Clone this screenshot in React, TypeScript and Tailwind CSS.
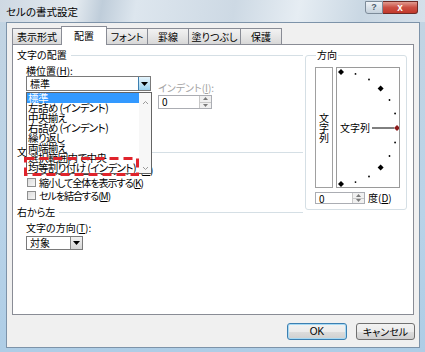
import React from "react";

const tabs = [
  { label: "表示形式", w: "w-[50px]" },
  { label: "配置", w: "w-[46px]", active: true },
  { label: "フォント", w: "w-[42px]" },
  { label: "罫線", w: "w-[42px]" },
  { label: "塗りつぶし", w: "w-[53px]" },
  { label: "保護", w: "w-[42px]" },
];

const items = [
  "標準",
  "左詰め (インデント)",
  "中央揃え",
  "右詰め (インデント)",
  "繰り返し",
  "両端揃え",
  "選択範囲内で中央",
  "均等割り付け (インデント)",
];

function GroupHeader({ title }: { title: string }) {
  return (
    <div className="flex items-center h-[12px] leading-[12px]">
      <span className="whitespace-nowrap">{title}</span>
      <div className="flex-1 h-px bg-[#d5dfe5] ml-[4px]" />
    </div>
  );
}

function DownArrow({ color = "#000" }: { color?: string }) {
  return (
    <svg width="7" height="4" viewBox="0 0 7 4">
      <polygon points="0,0 7,0 3.5,4" fill={color} />
    </svg>
  );
}

function Spin({ className }: { className: string }) {
  return (
    <div className={`flex border border-[#abadb3] bg-white ${className}`}>
      <div className="flex-1 pl-[3px] leading-[12px] text-[10px]">0</div>
      <div className="w-[12px] flex flex-col border-l border-[#c8c8c8] bg-[#f0f0f0]">
        <div className="flex-1 flex items-center justify-center border-b border-[#c8c8c8]">
          <svg width="5" height="3" viewBox="0 0 5 3">
            <polygon points="0,3 5,3 2.5,0" fill="#7a7a7a" />
          </svg>
        </div>
        <div className="flex-1 flex items-center justify-center">
          <svg width="5" height="3" viewBox="0 0 5 3">
            <polygon points="0,0 5,0 2.5,3" fill="#7a7a7a" />
          </svg>
        </div>
      </div>
    </div>
  );
}

function Check({ label, mnemonic }: { label: string; mnemonic: string }) {
  return (
    <div className="flex items-center h-[13px] ml-[10px]">
      <div className="w-[9px] h-[9px] border border-[#8e8f8f] bg-[linear-gradient(135deg,#dcdcdc,#f6f6f6)]" />
      <span className="ml-[3px] whitespace-nowrap leading-[12px] tracking-[-1px]">
        {label}(<span className="underline">{mnemonic}</span>)
      </span>
    </div>
  );
}

function Dial() {
  const cx = 4;
  const cy = 60;
  const r = 56;
  const marks = [-90, -75, -60, -45, -30, -15, 0, 15, 30, 45, 60, 75, 90];
  return (
    <svg width="62" height="119" viewBox="0 0 62 119">
      {marks.map((a) => {
        const rad = (a * Math.PI) / 180;
        const x = cx + r * Math.cos(rad);
        const y = cy - r * Math.sin(rad);
        if (a % 45 === 0) {
          const c = a === 0 ? "#8b1a1a" : "#000";
          return (
            <polygon
              key={a}
              points={`${x},${y - 3} ${x + 3},${y} ${x},${y + 3} ${x - 3},${y}`}
              fill={c}
            />
          );
        }
        return <circle key={a} cx={x} cy={y} r="0.9" fill="#000" />;
      })}
      <line x1="35" y1="60" x2="57" y2="60" stroke="#000" strokeWidth="1" />
      <text
        x="3"
        y="64"
        fontSize="10"
        fontFamily="'Noto Sans CJK JP', sans-serif"
        fill="#000"
      >
        文字列
      </text>
    </svg>
  );
}

export default function App() {
  return (
    <div className="w-[425px] h-[352px] overflow-hidden bg-[linear-gradient(180deg,#c3d4e2_0%,#b9d3e8_60%,#aecde6_100%)] font-['Noto_Sans_CJK_JP',sans-serif] [font-feature-settings:'palt'] text-[10px] text-black">
      <div className="h-[22px] flex items-start justify-between bg-[linear-gradient(100deg,#cfd9e3_0%,#e2e9ef_18%,#bfcdda_24%,#dde6ee_32%,#cdd9e4_55%,#e6edf3_70%,#c9d7e3_85%,#d5e0ea_100%)]">
        <div className="pl-[6px] pt-[5px] text-[10.5px] leading-[14px]">セルの書式設定</div>
        <div className="flex mt-[1px] mr-[7px]">
          <div className="w-[18px] h-[13px] rounded-bl-[3px] border border-[#7d8b99] bg-[linear-gradient(180deg,#eef2f6,#c5d1dc)] flex items-center justify-center text-[9px] leading-[9px] text-[#4e5d6c] font-['Liberation_Sans',sans-serif] font-bold">
            ?
          </div>
          <div className="w-[35px] h-[13px] rounded-br-[3px] border border-l-0 border-[#6e2a25] bg-[linear-gradient(180deg,#e19a8f_0%,#cb4f43_50%,#c2392c_100%)] flex items-center justify-center text-[10px] leading-[10px] text-white font-['Liberation_Sans',sans-serif] font-bold">
            x
          </div>
        </div>
      </div>
      <div className="ml-[6px] mr-[5px] h-[326px] border border-[#7d93a9] bg-[#f0f0f0] flex flex-col">
        <div className="mt-[3px] pl-[5px] h-[19px] flex items-end">
          {tabs.map((t, i) =>
            t.active ? (
              <div
                key={t.label}
                className={`${t.w} -ml-px relative z-10 h-[19px] border border-b-0 border-[#898c95] bg-white flex items-center justify-center pb-[2px]`}
              >
                {t.label}
              </div>
            ) : (
              <div
                key={t.label}
                className={`${t.w} ${i === 0 ? "" : "-ml-px"} h-[16px] mb-px border border-b-0 border-[#898c95] bg-[linear-gradient(180deg,#f2f2f2_0%,#e6e6e6_50%,#d8d8d8_100%)] flex items-center justify-center`}
              >
                {t.label}
              </div>
            )
          )}
        </div>
        <div className="relative mx-[5px] -mt-px h-[271px] border border-[#898c95] bg-white flex">
          <div className="w-[290px] pl-[4px] pt-[4px]">
            <GroupHeader title="文字の配置" />
            <div className="ml-[9px] mt-[5px] flex items-start">
              <div>
                <div className="h-[10px] leading-[10px]">
                  横位置(<span className="underline">H</span>):
                </div>
                <div className="w-[125px] h-[15px] border border-[#7a7a7a] bg-white flex">
                  <div className="flex-1 pl-[3px] leading-[13px]">標準</div>
                  <div className="w-[12px] border-l border-[#3c7fb1] bg-[linear-gradient(180deg,#e5f4fc_0%,#c4e5f6_50%,#98d1ef_100%)] flex items-center justify-center">
                    <DownArrow />
                  </div>
                </div>
              </div>
              <div className="ml-[7px] mt-[16px]">
                <div className="h-[12px] leading-[12px] text-[#a3a3a3] whitespace-nowrap">
                  インデント(<span className="underline">I</span>):
                </div>
                <Spin className="mt-[1px] w-[54px] h-[14px]" />
              </div>
            </div>
            <div className="mt-[37px]">
              <GroupHeader title="文字の制御" />
            </div>
            <div className="mt-[5px]">
              <Check label="折り返して全体を表示する" mnemonic="W" />
              <Check label="縮小して全体を表示する" mnemonic="K" />
              <Check label="セルを結合する" mnemonic="M" />
            </div>
            <div className="mt-[4px]">
              <GroupHeader title="右から左" />
            </div>
            <div className="ml-[9px]">
              <div className="mt-[4px] h-[12px] leading-[12px]">
                文字の方向(<span className="underline">T</span>):
              </div>
              <div className="mt-[2px] w-[57px] h-[14px] border border-[#7a7a7a] bg-white flex">
                <div className="flex-1 pl-[3px] leading-[12px]">対象</div>
                <div className="w-[12px] border-l border-[#8a8a8a] bg-[linear-gradient(180deg,#f2f2f2,#d6d6d6)] flex items-center justify-center">
                  <DownArrow />
                </div>
              </div>
            </div>
          </div>
          <fieldset className="ml-[2px] mt-[4px] w-[102px] h-[161px] border border-[#d5dfe5] rounded-[3px] pl-[9px] pt-[6px]">
            <legend className="ml-[1px] px-[1px] h-[12px] leading-[12px]">方向</legend>
            <div className="flex">
              <div className="w-[18px] h-[121px] border border-[#a0a0a0] bg-white flex flex-col items-center justify-center leading-[10px]">
                <span>文</span>
                <span>字</span>
                <span>列</span>
              </div>
              <div className="ml-[3px] w-[64px] h-[121px] border border-[#9a9a9a] bg-white">
                <Dial />
              </div>
            </div>
            <div className="mt-[4px] flex items-center">
              <Spin className="w-[50px] h-[12px]" />
              <span className="ml-[3px] leading-[12px] whitespace-nowrap">
                度(<span className="underline">D</span>)
              </span>
            </div>
          </fieldset>
          <div className="absolute left-[13px] top-[47px] w-[126px] h-[82px] border border-[#646464] bg-white flex">
            <div className="flex-1 flex flex-col overflow-hidden">
              {items.map((t, i) => (
                <div
                  key={t}
                  className={`h-[10px] leading-[10px] pl-[1px] whitespace-nowrap text-[10.5px] tracking-[-0.6px] ${
                    i === 0 ? "bg-[#3399ff] text-white" : ""
                  }`}
                >
                  {t}
                </div>
              ))}
            </div>
            <div className="w-[12px] bg-[#f7f7f7] flex flex-col justify-between items-center pt-[8px] pb-[3px]">
              <svg width="5" height="3" viewBox="0 0 5 3">
                <polyline points="0,3 2.5,0.5 5,3" fill="none" stroke="#9a9a9a" strokeWidth="1" />
              </svg>
              <svg width="5" height="3" viewBox="0 0 5 3">
                <polyline points="0,0 2.5,2.5 5,0" fill="none" stroke="#9a9a9a" strokeWidth="1" />
              </svg>
            </div>
          </div>
          <svg
            className="absolute left-[11px] top-[112px]"
            width="115"
            height="19"
            viewBox="0 0 115 19"
          >
            <rect
              x="1.5"
              y="1.5"
              width="112"
              height="16"
              fill="none"
              stroke="#e0242c"
              strokeWidth="3"
              strokeDasharray="9 5"
            />
          </svg>
        </div>
        <div className="mt-[8px] pr-[4px] flex justify-end gap-[9px]">
          <button className="w-[60px] h-[17px] rounded-[3px] border border-[#3c7fb1] bg-[linear-gradient(180deg,#f2f2f2_0%,#ebebeb_50%,#dddddd_51%,#cfcfcf_100%)] shadow-[inset_0_0_0_1px_#a6d9f4] leading-[14px] font-['Liberation_Sans',sans-serif] text-[10px]">
            OK
          </button>
          <button className="w-[59px] h-[17px] rounded-[3px] border border-[#707070] bg-[linear-gradient(180deg,#f2f2f2_0%,#ebebeb_50%,#dddddd_51%,#cfcfcf_100%)] leading-[14px] text-[10px]">
            キャンセル
          </button>
        </div>
      </div>
    </div>
  );
}
